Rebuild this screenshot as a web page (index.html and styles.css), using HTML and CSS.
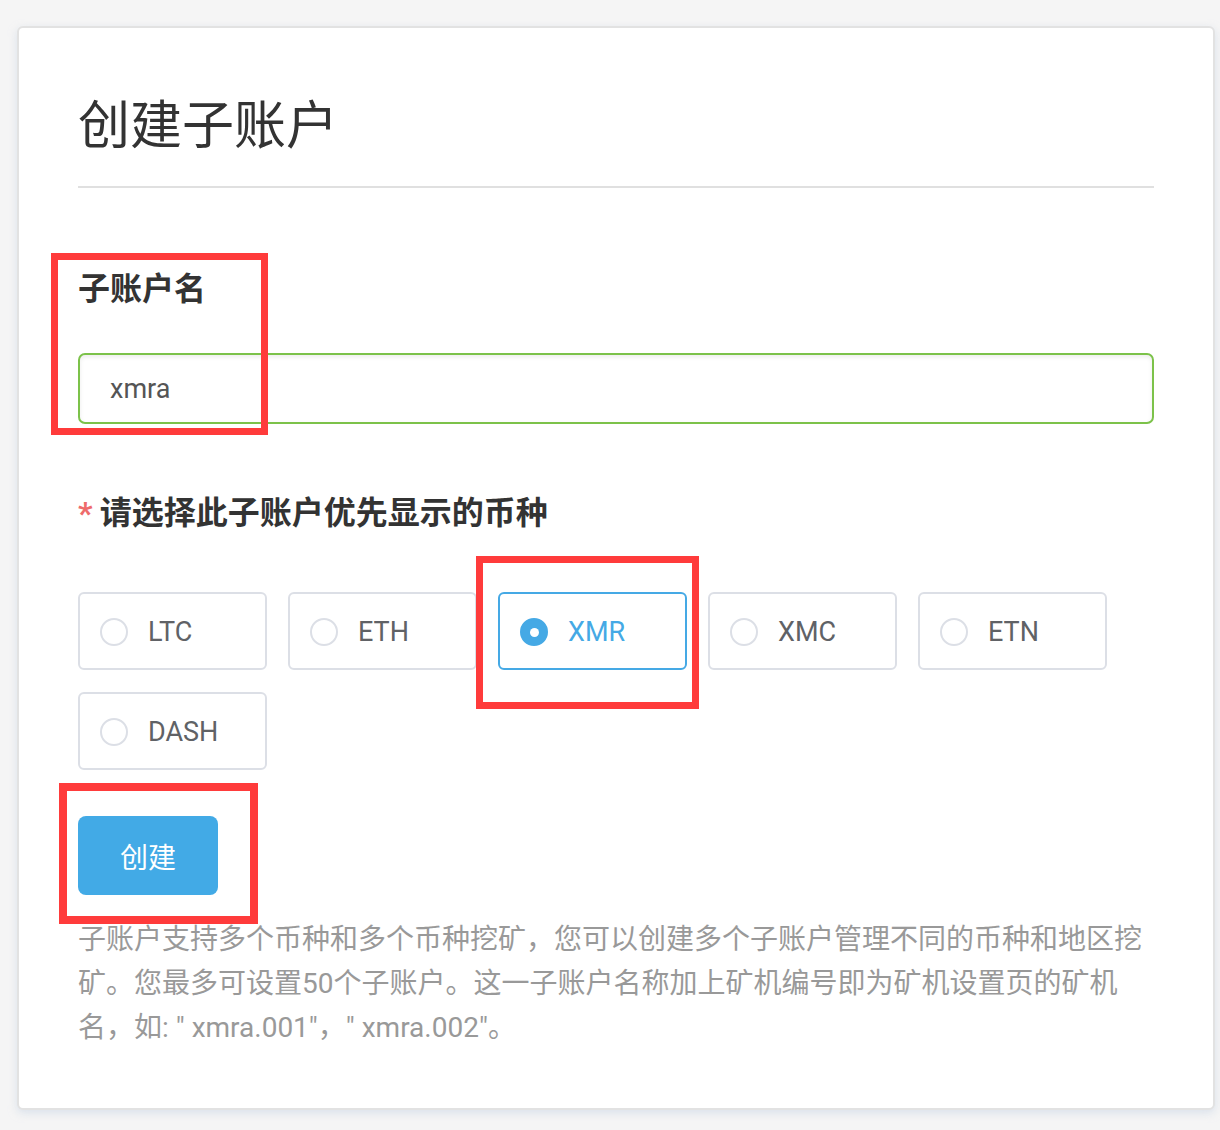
FILE: index.html
```html
<!DOCTYPE HTML>
<html lang="zh-CN">
<head>
<meta charset="utf-8">
<title>创建子账户</title>
<link rel="stylesheet" href="styles.css">
</head>
<body>
<div class="page">
 <div class="card">
  <h1 class="title">创建子账户</h1>

  <div class="field">
   <label class="label" for="name">子账户名</label>
   <input class="input" id="name" type="text" value="xmra">
  </div>

  <div class="field">
   <div class="label"><span class="star">*</span> 请选择此子账户优先显示的币种</div>
   <div class="coins">
    <label class="coin"><span class="dot"></span>LTC</label>
    <label class="coin"><span class="dot"></span>ETH</label>
    <label class="coin checked"><span class="dot"></span>XMR</label>
    <label class="coin"><span class="dot"></span>XMC</label>
    <label class="coin"><span class="dot"></span>ETN</label>
    <label class="coin"><span class="dot"></span>DASH</label>
   </div>
  </div>

  <button class="submit" type="button">创建</button>

  <p class="note">子账户支持多个币种和多个币种挖矿，您可以创建多个子账户管理不同的币种和地区挖矿。您最多可设置50个子账户。这一子账户名称加上矿机编号即为矿机设置页的矿机名，如: " xmra.001"，" xmra.002"。</p>
 </div>

 <!-- annotation boxes drawn over the screenshot -->
 <div class="mark mark-name"></div>
 <div class="mark mark-coin"></div>
 <div class="mark mark-button"></div>
</div>
</body>
</html>
```

FILE: styles.css
```css
/* Page background */
body {
  margin: 0;
  padding: 0;
  background: #f5f5f5;
  font-family: Roboto, "Noto Sans CJK SC", sans-serif;
  color: #333;
}
.page {
  position: relative;
  padding: 26px 5px 20px 17px;
}
/* White panel */
.card {
  background: #fff;
  border: 2px solid #e2e2e2;
  border-radius: 6px;
  box-shadow: 0 3px 8px rgba(200, 212, 228, 0.6);
  padding: 58px 59px 58px 59px;
}
.title {
  margin: 0;
  font-family: "Noto Sans CJK SC", sans-serif;
  font-weight: 400;
  font-size: 52px;
  line-height: 72px;
  color: #333;
  padding-bottom: 28px;
  border-bottom: 2px solid #e0e0e0;
}
.field {
  display: flex;
  flex-direction: column;
}
.label {
  font-family: "Noto Sans CJK SC", sans-serif;
  font-weight: 700;
  font-size: 32px;
  line-height: 44px;
  color: #333;
  margin-top: 76px;
  margin-bottom: 45px;
}
.field + .field .label {
  margin-top: 64px;
  margin-bottom: 57px;
}
.star {
  color: #ee6b6b;
  font-family: Roboto, sans-serif;
}
/* Sub-account name input */
.input {
  box-sizing: border-box;
  height: 71px;
  border: 2px solid #7cc24a;
  border-radius: 7px;
  box-shadow: inset 0 2px 4px rgba(0, 0, 0, 0.08);
  padding: 0 30px;
  font-family: Roboto, sans-serif;
  font-size: 27px;
  color: #555;
  outline: none;
}
/* Coin radio buttons */
.coins {
  display: flex;
  flex-wrap: wrap;
  column-gap: 21px;
  row-gap: 22px;
}
.coin {
  box-sizing: border-box;
  width: 189px;
  height: 78px;
  border: 2px solid #dcdfe6;
  border-radius: 6px;
  display: flex;
  align-items: center;
  gap: 20px;
  padding: 2px 0 0 20px;
  font-family: Roboto, sans-serif;
  font-size: 27px;
  color: #606266;
}
.dot {
  box-sizing: border-box;
  width: 28px;
  height: 28px;
  border: 2px solid #dcdfe6;
  border-radius: 50%;
  position: relative;
}
.coin.checked {
  border-color: #45a9e5;
  color: #45a9e5;
}
.coin.checked .dot {
  border-color: #45a9e5;
  background: #45a9e5;
}
.coin.checked .dot::after {
  content: "";
  position: absolute;
  left: 50%;
  top: 50%;
  width: 9px;
  height: 9px;
  margin: -4.5px 0 0 -4.5px;
  border-radius: 50%;
  background: #fff;
}
/* Create button */
.submit {
  display: block;
  margin-top: 46px;
  width: 140px;
  height: 79px;
  border: none;
  border-radius: 8px;
  background: #42aae6;
  color: #fff;
  font-family: "Noto Sans CJK SC", sans-serif;
  font-size: 28px;
}
.note {
  margin: 23px 0 0 0;
  font-size: 28px;
  line-height: 44px;
  color: #999;
}
/* Red annotation rectangles */
.mark {
  position: absolute;
  box-sizing: border-box;
  border: 7px solid #ff3b3b;
}
.mark-name {
  left: 51px;
  top: 253px;
  width: 217px;
  height: 182px;
}
.mark-coin {
  left: 476px;
  top: 556px;
  width: 223px;
  height: 153px;
}
.mark-button {
  left: 59px;
  top: 783px;
  width: 199px;
  height: 141px;
  border-width: 8px;
}
```
